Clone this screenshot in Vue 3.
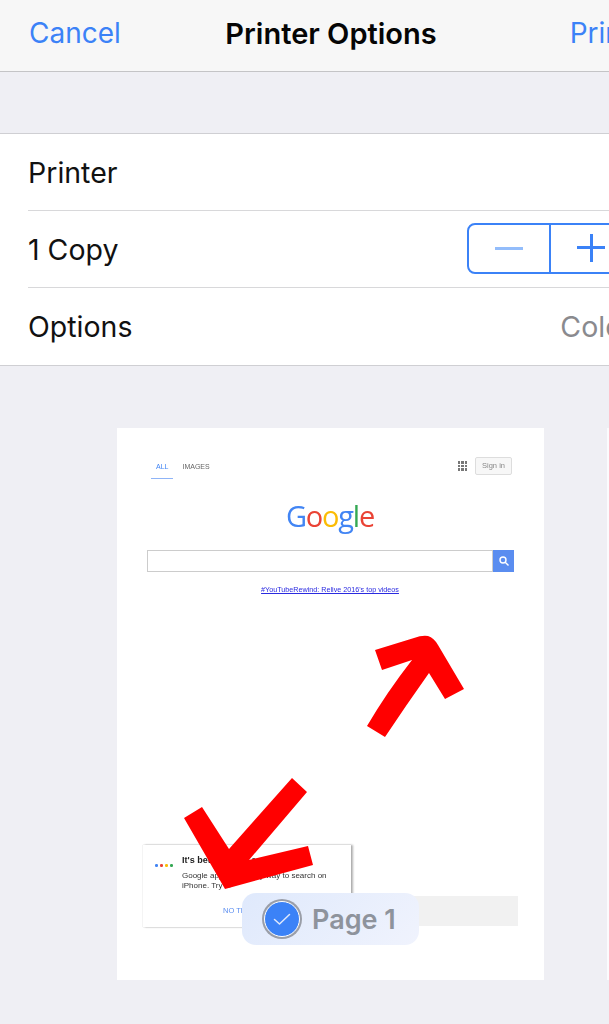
<script setup>
const rows = [
  { label: 'Printer' },
  { label: '1 Copy', stepper: true },
  { label: 'Options', value: 'Color' },
]
const dots = ['#4285f4', '#ea4335', '#fbbc05', '#34a853']
const logo = [
  ['G', '#4285f4'],
  ['o', '#ea4335'],
  ['o', '#fbbc05'],
  ['g', '#4285f4'],
  ['l', '#34a853'],
  ['e', '#ea4335'],
]
</script>

<template>
  <div class="screen">
    <header class="nav">
      <span class="nav-link">Cancel</span>
      <span class="nav-title">Printer Options</span>
      <span class="nav-link nav-right">Print</span>
    </header>

    <section class="settings">
      <div v-for="row in rows" :key="row.label" class="row">
        <span class="row-label">{{ row.label }}</span>
        <div v-if="row.stepper" class="stepper">
          <div class="step step-minus"><span class="minus"></span></div>
          <div class="step"><span class="plus"></span></div>
        </div>
        <span v-if="row.value" class="row-value">{{ row.value }}</span>
      </div>
    </section>

    <section class="preview">
      <div class="paper">
        <div class="page-content">
          <div class="tabs">
            <div class="tab-group">
              <span class="tab tab-active">ALL</span>
              <span class="tab">IMAGES</span>
            </div>
            <div class="account">
              <span class="apps">
                <i v-for="n in 9" :key="n"></i>
              </span>
              <span class="signin">Sign in</span>
            </div>
          </div>

          <div class="logo">
            <span v-for="(l, i) in logo" :key="i" :style="{ color: l[1] }">{{ l[0] }}</span>
          </div>

          <div class="search">
            <div class="search-input"></div>
            <div class="search-btn">
              <svg width="12" height="12" viewBox="0 0 12 12" fill="none" stroke="#fff" stroke-width="1.4">
                <circle cx="5" cy="5" r="3" />
                <path d="M7.2 7.2 10.5 10.5" />
              </svg>
            </div>
          </div>

          <a class="doodle">#YouTubeRewind: Relive 2016's top videos</a>

          <div class="footer-bar"></div>
        </div>

        <div class="dialog">
          <div class="dialog-dots">
            <i v-for="c in dots" :key="c" :style="{ background: c }"></i>
          </div>
          <div class="dialog-body">
            <div class="dialog-title">It's better in the app</div>
            <div class="dialog-text">Google app is the easy way to search on iPhone. Try it.</div>
            <div class="dialog-action">NO THANKS</div>
          </div>
        </div>
      </div>

      <div class="paper-next"></div>

      <svg class="marks" width="609" height="1024" viewBox="0 0 609 1024">
        <path fill="#ff0000" d="M375 650 L414 638 Q422 635 428 636 Q434 638 438 645 L464 689 L445 699 L429 673 Q407 704 385 737 L367 726 Q387 692 412 660 L382 670 Z" />
        <path fill="#ff0000" d="M292 778 L307 792 L249 860 L308 846 L313 865 L225 889 L184 818 L202 807 L229 849 Z" />
      </svg>

      <div class="page-pill">
        <span class="check">
          <svg width="20" height="20" viewBox="0 0 20 20" fill="none" stroke="#dfe8fb" stroke-width="1.5" stroke-linecap="round" stroke-linejoin="round">
            <path d="M2.5 10.5 7.5 15 17.5 5.5" />
          </svg>
        </span>
        <span class="pill-text">Page 1</span>
      </div>
    </section>
  </div>
</template>

<style>
html, body {
  margin: 0;
  background: #efeff4;
}
</style>

<style scoped>
.screen {
  position: relative;
  width: 609px;
  height: 1024px;
  overflow: hidden;
  background: #efeff4;
  font-family: Inter, "Liberation Sans", sans-serif;
}

.nav {
  display: grid;
  grid-template-columns: 1fr auto 1fr;
  align-items: center;
  box-sizing: border-box;
  width: 662px;
  height: 72px;
  padding: 0 29px 5px;
  background: #f7f7f7;
  border-bottom: 1px solid #c4c4c6;
}

.nav-link {
  font-size: 28px;
  color: #3b82f7;
}

.nav-right {
  margin-right: 2px;
  text-align: right;
}

.nav-title {
  font-size: 29px;
  font-weight: 600;
  color: #050505;
}

.settings {
  width: 662px;
  margin-top: 61px;
  background: #fff;
  border-top: 1px solid #cfcfd3;
  border-bottom: 1px solid #cfcfd3;
}

.row {
  display: flex;
  align-items: center;
  justify-content: space-between;
  box-sizing: border-box;
  height: 77px;
  margin-left: 28px;
  padding-right: 29px;
  border-bottom: 1px solid #d8d8da;
}

.row:last-child {
  height: 77px;
  border-bottom: none;
}

.row-label {
  font-size: 28.5px;
  color: #111;
}

.row-value {
  font-size: 28.5px;
  color: #8a8a8e;
}

.stepper {
  display: flex;
  box-sizing: border-box;
  width: 166px;
  height: 51px;
  margin-top: -2px;
  border: 2px solid #3b82f7;
  border-radius: 8px;
}

.step {
  position: relative;
  flex: 1;
}

.step-minus {
  border-right: 2px solid #3b82f7;
}

.minus {
  position: absolute;
  left: 26px;
  top: 22px;
  width: 28px;
  height: 3px;
  background: #93bdfb;
}

.plus {
  position: absolute;
  left: 26px;
  top: 9px;
  width: 28px;
  height: 28px;
  background:
    linear-gradient(#3b82f7, #3b82f7) center / 28px 3px no-repeat,
    linear-gradient(#3b82f7, #3b82f7) center / 3px 28px no-repeat;
}

.preview {
  position: absolute;
  left: 0;
  top: 366px;
  width: 609px;
  height: 658px;
}

.paper {
  position: absolute;
  left: 117px;
  top: 62px;
  width: 427px;
  height: 552px;
  background: #fff;
}

.paper-next {
  position: absolute;
  left: 607px;
  top: 62px;
  width: 2px;
  height: 552px;
  background: #fbfbfd;
}

.page-content {
  display: flex;
  flex-direction: column;
  box-sizing: border-box;
  height: 100%;
  padding: 30px 26px 54px 30px;
  font-family: "Liberation Sans", sans-serif;
  filter: blur(0.35px);
}

.tabs {
  display: flex;
  justify-content: space-between;
  align-items: flex-start;
  height: 22px;
  padding-right: 6px;
}

.tab-group {
  display: flex;
  gap: 4px;
  margin-left: 4px;
}

.tab {
  height: 21px;
  padding: 5px 5px 0;
  box-sizing: border-box;
  font-size: 7px;
  color: #666;
}

.tab-active {
  color: #4285f4;
  border-bottom: 1px solid #8fb4f7;
}

.account {
  display: flex;
  align-items: center;
  gap: 8px;
  margin-top: -1px;
}

.apps {
  display: grid;
  grid-template-columns: repeat(3, 2.5px);
  gap: 1px;
}

.apps i {
  width: 2.5px;
  height: 2.5px;
  background: #777;
}

.signin {
  box-sizing: border-box;
  width: 37px;
  height: 18px;
  border: 1px solid #ddd;
  border-radius: 2px;
  background: #f7f7f7;
  font-size: 7.5px;
  line-height: 16px;
  text-align: center;
  color: #888;
}

.logo {
  margin-top: 20px;
  margin-right: 5px;
  height: 32px;
  font-family: "Open Sans", sans-serif;
  font-size: 29px;
  font-weight: 500;
  line-height: 32px;
  letter-spacing: -1.2px;
  text-align: center;
}

.search {
  display: flex;
  margin-top: 18px;
  margin-right: 4px;
  height: 22px;
}

.search-input {
  flex: 1;
  box-sizing: border-box;
  border: 1px solid #ccc;
}

.search-btn {
  display: flex;
  align-items: center;
  justify-content: center;
  width: 21px;
  background: #5a8df0;
}

.doodle {
  margin-top: 12px;
  margin-right: 5px;
  font-size: 7.2px;
  line-height: 12px;
  text-align: center;
  color: #2a2ae0;
  text-decoration: underline;
}

.footer-bar {
  align-self: flex-end;
  width: 166px;
  height: 30px;
  margin-top: auto;
  background: #f1f1f1;
}

.dialog {
  position: absolute;
  left: 26px;
  top: 417px;
  display: flex;
  box-sizing: border-box;
  width: 208px;
  height: 82px;
  background: #fff;
  font-family: "Liberation Sans", sans-serif;
  box-shadow: 2px 0 2px rgba(0, 0, 0, 0.3), 0 0 1px rgba(0, 0, 0, 0.25);
  filter: blur(0.35px);
}

.dialog-dots {
  display: flex;
  gap: 2.5px;
  width: 39px;
  padding: 19px 0 0 12px;
  box-sizing: border-box;
}

.dialog-dots i {
  width: 2.5px;
  height: 2.5px;
  border-radius: 50%;
}

.dialog-body {
  flex: 1;
  padding-top: 10px;
  font-size: 8px;
  color: #333;
}

.dialog-title {
  font-size: 9px;
  font-weight: 700;
  color: #222;
}

.dialog-text {
  margin-top: 6px;
  line-height: 9.5px;
  width: 150px;
}

.dialog-action {
  margin-top: 16px;
  padding-left: 41px;
  font-size: 7.5px;
  color: #5a8df0;
}

.marks {
  position: absolute;
  left: 0;
  top: -366px;
}

.page-pill {
  position: absolute;
  left: 242px;
  top: 527px;
  display: flex;
  align-items: center;
  gap: 12px;
  box-sizing: border-box;
  width: 177px;
  height: 52px;
  padding-left: 21px;
  border-radius: 14px;
  background: linear-gradient(135deg, #dfe9fc, #f0f3fd);
}

.check {
  display: flex;
  align-items: center;
  justify-content: center;
  box-sizing: border-box;
  width: 36px;
  height: 36px;
  margin-left: 1px;
  border-radius: 50%;
  background: #3b82f7;
  border: 1.5px solid #fff;
  box-shadow: 0 0 0 2px #9a9ea8;
}

.pill-text {
  font-size: 27px;
  font-weight: 600;
  color: #8e939c;
}
</style>
